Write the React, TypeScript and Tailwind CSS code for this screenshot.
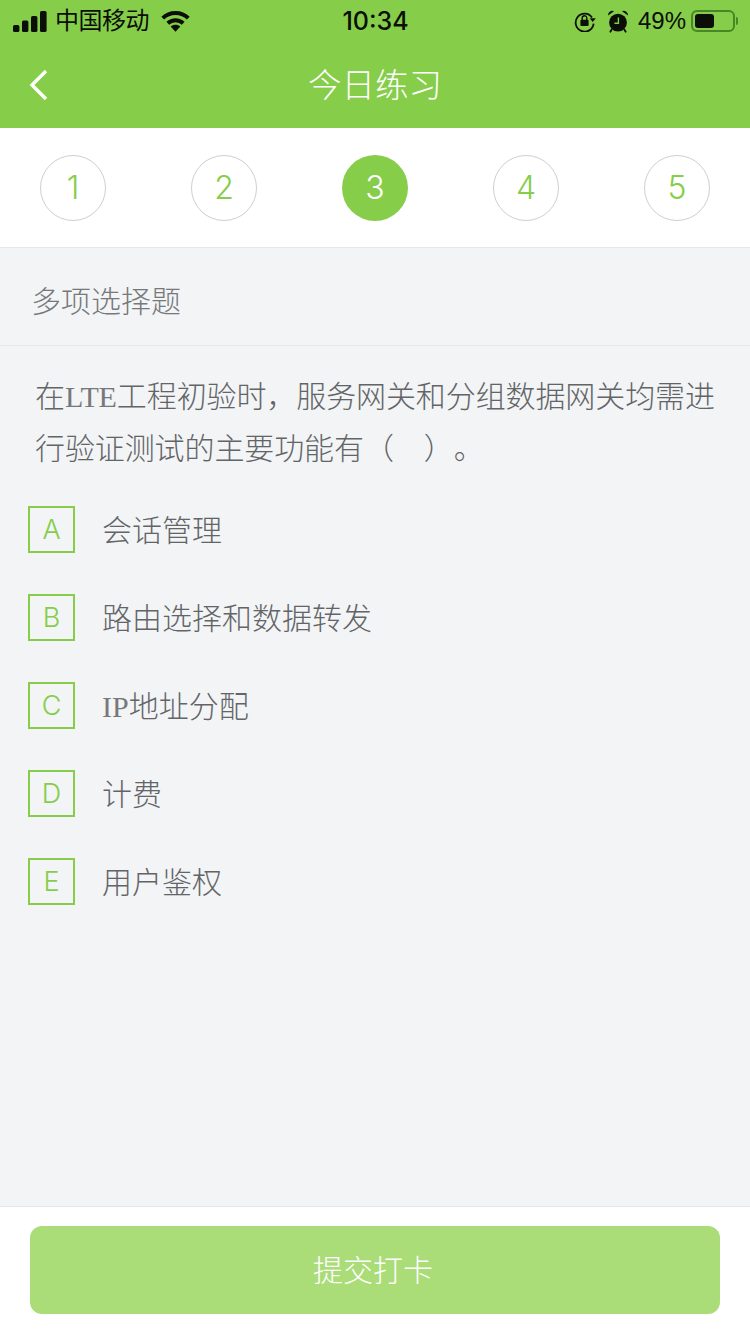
const CJK = "font-['Liberation_Serif','Noto_Sans_CJK_SC',serif]";
const SANS = "font-['Liberation_Sans','Noto_Sans_CJK_SC',sans-serif]";
const LIGHT = "font-['Inter','Noto_Sans_CJK_SC',sans-serif] font-light";

const STEPS = [1, 2, 3, 4, 5];
const OPTIONS = [
    { key: 'A', label: <>会话管理</> },
    { key: 'B', label: <>路由选择和数据转发</> },
    { key: 'C', label: <><span className="text-[#77787b]">IP</span>地址分配</> },
    { key: 'D', label: <>计费</> },
    { key: 'E', label: <>用户鉴权</> },
];

function SignalIcon() {
    return (
        <svg width="34" height="21" viewBox="0 0 34 21" fill="#0b0f08">
            <rect x="0" y="14" width="6.4" height="7" rx="1.6" />
            <rect x="9" y="9.5" width="6.4" height="11.5" rx="1.6" />
            <rect x="18" y="5" width="6.4" height="16" rx="1.6" />
            <rect x="27" y="0" width="6.6" height="21" rx="1.6" />
        </svg>
    );
}

function WifiIcon() {
    return (
        <svg width="29" height="22" viewBox="0 0 30 22" fill="none" stroke="#0b0f08" strokeWidth="4.2">
            <path d="M1.8 8C9 1 21 1 28.2 8" />
            <path d="M7 13.4c4.6-4.2 11.4-4.2 16 0" />
            <path d="M15 22l-5-5.2c2.8-2.4 7.2-2.4 10 0z" fill="#0b0f08" stroke="none" />
        </svg>
    );
}

function RotationLockIcon() {
    return (
        <svg width="22" height="22" viewBox="0 0 22 22" fill="none" stroke="#0b0f08" strokeWidth="1.8">
            <path d="M18 7.4A9 9 0 1 0 19.6 13.6" />
            <path d="M15.6 8.2h6.2l-3.1 3.8z" fill="#0b0f08" stroke="none" />
            <rect x="6.4" y="9.8" width="8.2" height="6.2" rx="1" fill="#0b0f08" stroke="none" />
            <path d="M8.2 10V8a2.3 2.3 0 0 1 4.6 0v2" strokeWidth="1.4" />
        </svg>
    );
}

function AlarmIcon() {
    return (
        <svg width="22" height="23" viewBox="0 0 22 23" fill="#0b0f08">
            <circle cx="11" cy="12.6" r="8.9" />
            <path d="M1 5.6A4.4 4.4 0 0 1 7 1.2z" />
            <path d="M21 5.6A4.4 4.4 0 0 0 15 1.2z" />
            <path d="M5 19l-2 3.4M17 19l2 3.4" stroke="#0b0f08" strokeWidth="1.8" />
            <path d="M11.4 7.4V13.2H7.4" fill="none" stroke="#86cd4a" strokeWidth="1.4" />
        </svg>
    );
}

function BatteryIcon() {
    return (
        <div className="flex items-center">
            <div className="flex h-[22px] w-[44px] items-center rounded-[6px] border-2 border-[#4a8526] p-[2px]">
                <div className="h-[14px] w-[19px] rounded-[3px] bg-[#0b0f08]" />
            </div>
            <div className="ml-[1px] h-[8px] w-[2px] rounded-r-sm bg-[#4a8526]" />
        </div>
    );
}

function StatusBar() {
    return (
        <div className="flex h-[40px] items-center justify-between pl-[13px] pr-[12px] pt-[2px] text-[#0b0f08]">
            <div className="flex w-[220px] items-center">
                <SignalIcon />
                <span className={`${SANS} ml-[8px] text-[24px] leading-none tracking-[-0.5px]`}>中国移动</span>
                <span className="ml-[12px]"><WifiIcon /></span>
            </div>
            <span className="font-['Inter',sans-serif] text-[25px] font-medium leading-none">10:34</span>
            <div className="flex w-[220px] items-center justify-end">
                <RotationLockIcon />
                <span className="ml-[11px]"><AlarmIcon /></span>
                <span className={`${SANS} ml-[9px] text-[24px] leading-none`}>49%</span>
                <span className="ml-[5px]"><BatteryIcon /></span>
            </div>
        </div>
    );
}

function NavBar() {
    return (
        <div className="relative flex h-[88px] items-center justify-center pt-[4px]">
            <svg className="absolute left-[28px] top-[28px]" width="22" height="34" viewBox="0 0 22 34" fill="none" stroke="#fff" strokeWidth="3.4">
                <path d="M18 3L4 17l14 14" />
            </svg>
            <span className={`${SANS} text-[33.5px] font-light leading-none text-white`}>今日练习</span>
        </div>
    );
}

function StepPicker() {
    return (
        <div className="flex h-[120px] items-center justify-between border-b border-[#e6e7ea] bg-white px-[40px]">
            {STEPS.map((n) =>
                n === 3 ? (
                    <div key={n} className={`${LIGHT} flex h-[66px] w-[66px] items-center justify-center rounded-full bg-[#86cd4a] text-[32px] text-white`}>
                        {n}
                    </div>
                ) : (
                    <div key={n} className={`${LIGHT} flex h-[66px] w-[66px] items-center justify-center rounded-full border border-[#cfcfcf] text-[32px] text-[#86cd4a]`}>
                        {n}
                    </div>
                )
            )}
        </div>
    );
}

export default function App() {
    return (
        <div className="flex h-[1334px] w-[750px] flex-col overflow-hidden bg-[#f2f4f6]">
            <div className="bg-[#86cd4a]">
                <StatusBar />
                <NavBar />
            </div>
            <StepPicker />

            <div className="flex h-[98px] items-center border-b border-[#e6e7ea] pl-[31px] pt-[10px]">
                <span className={`${CJK} text-[30px] font-light leading-none text-[#77787b]`}>多项选择题</span>
            </div>

            <p className={`${CJK} mt-[25px] pl-[35px] pr-[30px] text-[30px] font-light leading-[52px] tracking-[-0.1px] text-[#636467] [text-spacing-trim:space-all]`}>
                在<span className="text-[#77787b]">LTE</span>工程初验时，服务网关和分组数据网关均需进行验证测试的主要功能有（<span className="inline-block w-[30px]" />）。
            </p>

            <div className="mt-[31px] flex flex-col gap-[41px] pl-[28px]">
                {OPTIONS.map((o) => (
                    <div key={o.key} className="flex items-center">
                        <div className={`${LIGHT} flex h-[47px] w-[47px] items-center justify-center border-2 border-[#86cd4a] pt-[2px] text-[27px] text-[#86cd4a]`}>
                            {o.key}
                        </div>
                        <span className={`${CJK} ml-[27px] pt-[2px] text-[30px] font-light leading-none text-[#636467]`}>{o.label}</span>
                    </div>
                ))}
            </div>

            <div className="mt-auto h-[128px] border-t border-[#e6e7ea] bg-white px-[30px] pt-[19px]">
                <button className={`${SANS} flex h-[88px] w-full items-center justify-center rounded-[12px] bg-[#aadc78] pr-[4px] text-[30px] font-light text-white`}>
                    提交打卡
                </button>
            </div>
        </div>
    );
}
